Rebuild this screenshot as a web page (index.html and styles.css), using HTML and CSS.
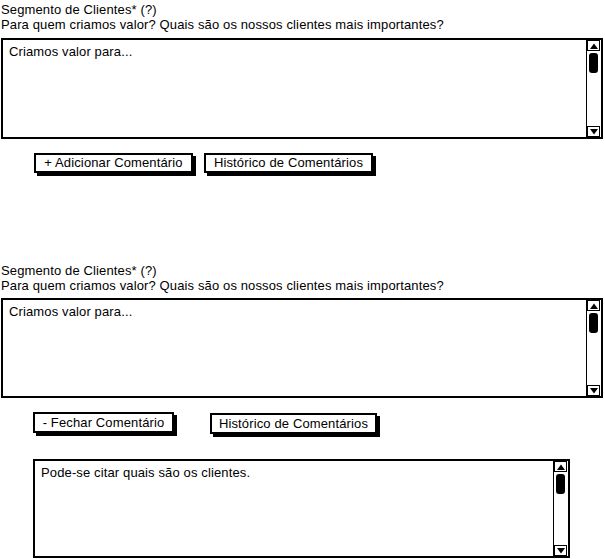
FILE: index.html
```html
<!DOCTYPE html>
<html lang="pt">
<head>
<meta charset="utf-8">
<title>Segmento de Clientes</title>
<link rel="stylesheet" href="styles.css">
</head>
<body>
<div class="page">
  <section class="block">
    <div class="label">Segmento de Clientes* (?)</div>
    <div class="label">Para quem criamos valor? Quais são os nossos clientes mais importantes?</div>
    <div class="textbox main">
      <div class="content">Criamos valor para...</div>
      <div class="scroll">
        <div class="arrow"><svg width="10" height="8" viewBox="0 0 10 8"><path d="M1 7 L5 1.5 L9 7 Z" fill="#000"/></svg></div>
        <div class="thumb"></div>
        <div class="track"></div>
        <div class="arrow"><svg width="10" height="8" viewBox="0 0 10 8"><path d="M1 1 L5 6.5 L9 1 Z" fill="#000"/></svg></div>
      </div>
    </div>
    <div class="buttons row1">
      <div class="btn b-add">+ Adicionar Comentário</div>
      <div class="btn b-hist">Histórico de Comentários</div>
    </div>
  </section>

  <section class="block second">
    <div class="label">Segmento de Clientes* (?)</div>
    <div class="label">Para quem criamos valor? Quais são os nossos clientes mais importantes?</div>
    <div class="textbox main">
      <div class="content">Criamos valor para...</div>
      <div class="scroll">
        <div class="arrow"><svg width="10" height="8" viewBox="0 0 10 8"><path d="M1 7 L5 1.5 L9 7 Z" fill="#000"/></svg></div>
        <div class="thumb"></div>
        <div class="track"></div>
        <div class="arrow"><svg width="10" height="8" viewBox="0 0 10 8"><path d="M1 1 L5 6.5 L9 1 Z" fill="#000"/></svg></div>
      </div>
    </div>
    <div class="buttons row2">
      <div class="btn b-close">- Fechar Comentário</div>
      <div class="btn b-hist2">Histórico de Comentários</div>
    </div>
    <div class="textbox comment">
      <div class="content">Pode-se citar quais são os clientes.</div>
      <div class="scroll">
        <div class="arrow"><svg width="10" height="8" viewBox="0 0 10 8"><path d="M1 7 L5 1.5 L9 7 Z" fill="#000"/></svg></div>
        <div class="thumb"></div>
        <div class="track"></div>
        <div class="arrow"><svg width="10" height="8" viewBox="0 0 10 8"><path d="M1 1 L5 6.5 L9 1 Z" fill="#000"/></svg></div>
      </div>
    </div>
  </section>
</div>
</body>
</html>
```
FILE: styles.css
```css
html, body {
  margin: 0;
  padding: 0;
  background: #fff;
}
body {
  font-family: "Liberation Sans", Arial, sans-serif;
  font-size: 13px;
  letter-spacing: 0.13px;
  color: #000;
}
.page {
  width: 605px;
  padding-top: 2px;
}
.label {
  line-height: 15px;
  height: 15px;
  padding-left: 1px;
  white-space: nowrap;
}
.second {
  margin-top: 90px;
}
.textbox {
  box-sizing: border-box;
  border: 2px solid #000;
  display: flex;
  background: #fff;
}
.main {
  margin: 6px 2px 0 1px;
  height: 101px;
}
.second .main {
  margin-top: 5px;
  height: 100px;
}
.comment {
  margin: 25px 0 0 33px;
  width: 537px;
  height: 99px;
}
.content {
  flex: 1;
  padding: 4px 0 0 6px;
  line-height: 15px;
}
.scroll {
  width: 14px;
  box-sizing: border-box;
  border: 1px solid #000;
  border-width: 0 0 0 1px;
  display: flex;
  flex-direction: column;
  margin-right: 1px;
}
.arrow {
  height: 11px;
  box-sizing: border-box;
  border: 1px solid #000;
  display: flex;
  align-items: center;
  justify-content: center;
}
.arrow svg {
  display: block;
}
.thumb {
  height: 20px;
  margin: 2px 2px 0 2px;
  background: #000;
  border-radius: 3px;
}
.track {
  flex: 1;
}
.buttons {
  display: flex;
  margin-left: 34px;
}
.row1 {
  margin-top: 14px;
  gap: 11px;
}
.row2 {
  margin-top: 14px;
  margin-left: 33px;
  gap: 36px;
  align-items: flex-start;
}
.btn {
  box-sizing: border-box;
  height: 20px;
  border: 2px solid #000;
  background: #fff;
  box-shadow: 3px 3px 0 #000;
  line-height: 16px;
  text-align: center;
  white-space: nowrap;
}
.b-add { width: 159px; }
.b-hist { width: 169px; }
.b-close { width: 141px; height: 21px; line-height: 17px; }
.b-hist2 { width: 167px; height: 21px; margin-top: 1px; line-height: 17px; }
.comment .content {
  padding-left: 6px;
}
```
